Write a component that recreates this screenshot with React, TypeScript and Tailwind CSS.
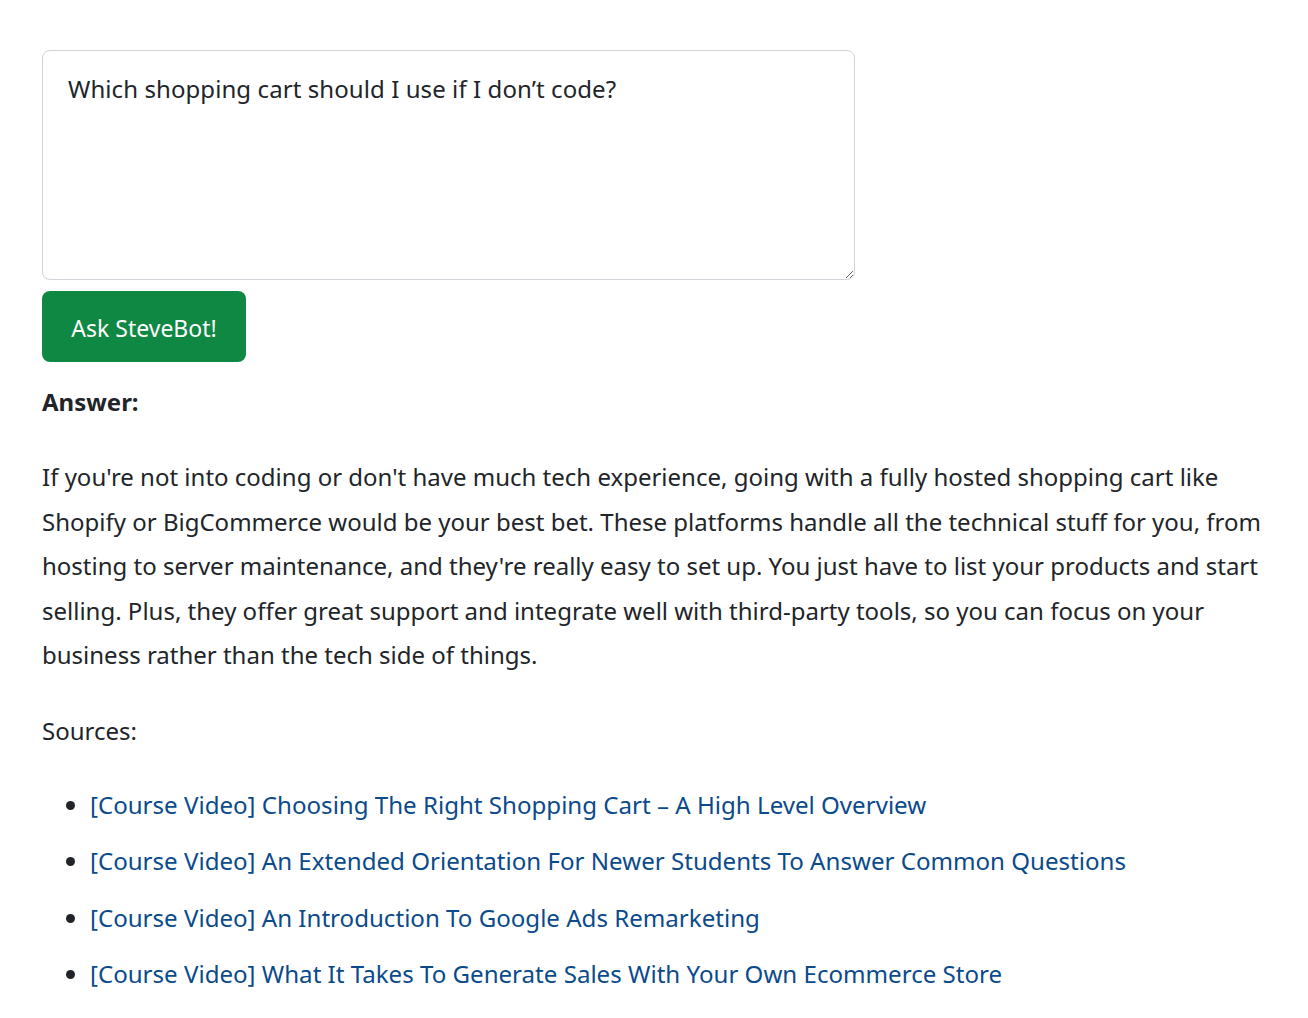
import React from "react";

const sources = [
  "[Course Video] Choosing The Right Shopping Cart – A High Level Overview",
  "[Course Video] An Extended Orientation For Newer Students To Answer Common Questions",
  "[Course Video] An Introduction To Google Ads Remarketing",
  "[Course Video] What It Takes To Generate Sales With Your Own Ecommerce Store",
];

export default function App() {
  return (
    <div className="min-h-screen bg-white px-[42px] pt-[50px] text-[#212529] font-['Noto_Sans',sans-serif]">
      <textarea
        className="block w-[813px] h-[230px] rounded-lg border border-[#ced4da] px-[25px] py-[20px] text-[24px] leading-[1.5] tracking-[0.08px] text-[#212529] outline-none"
        defaultValue="Which shopping cart should I use if I don’t code?"
      />
      <button className="mt-[11px] w-[204px] h-[71px] pt-[3px] rounded-lg bg-[#0f8843] text-white text-[23px]">
        Ask SteveBot!
      </button>
      <div className="mt-[22px] text-[24px] font-bold leading-[36px]">Answer:</div>
      <p className="mt-[35px] w-[1230px] text-[24px] leading-[44.6px] tracking-[0px]">
        If you're not into coding or don't have much tech experience, going with a fully hosted shopping cart like
        Shopify or BigCommerce would be your best bet. These platforms handle all the technical stuff for you, from
        hosting to server maintenance, and they're really easy to set up. You just have to list your products and start
        selling. Plus, they offer great support and integrate well with third-party tools, so you can focus on your
        business rather than the tech side of things.
      </p>
      <p className="mt-[31px] text-[24px] leading-[44.6px]">Sources:</p>
      <ul className="mt-[33px] list-disc pl-[48px] marker:text-[#212529]">
        {sources.map((s) => (
          <li key={s} className="text-[24.1px] leading-[36px] mb-[20.5px]">
            <a href="#" className="text-[#0b4a8b]">{s}</a>
          </li>
        ))}
      </ul>
    </div>
  );
}
